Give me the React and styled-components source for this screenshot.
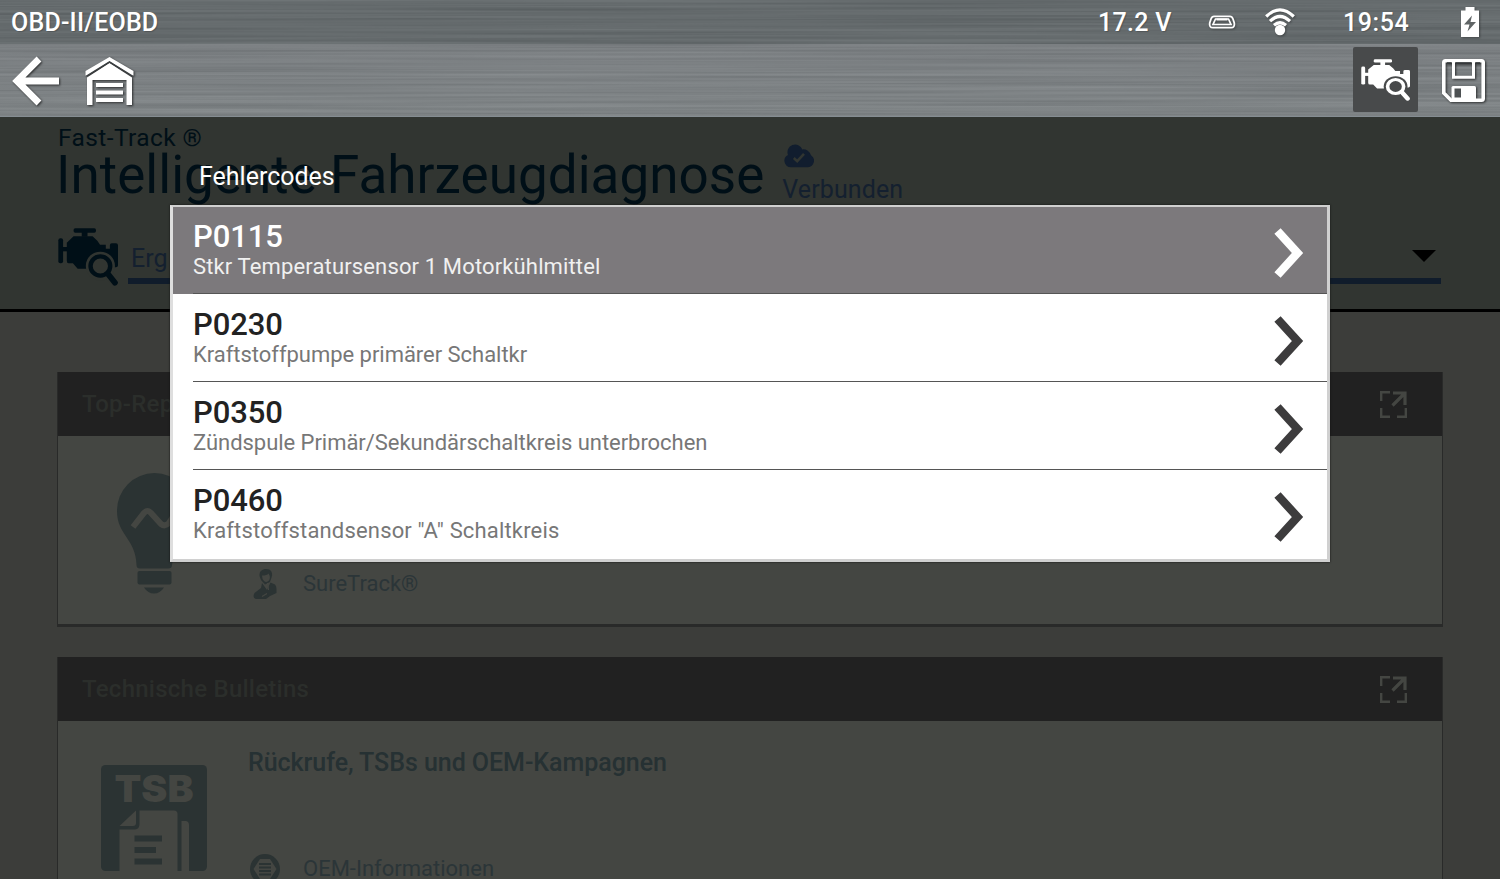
import React, { useState } from "react";
import styled, { createGlobalStyle } from "styled-components";


const codes = [
    { code: "P0115", text: "Stkr Temperatursensor 1 Motorkühlmittel", spacing: 0.14 },
    { code: "P0230", text: "Kraftstoffpumpe primärer Schaltkr", spacing: -0.03 },
    { code: "P0350", text: "Zündspule Primär/Sekundärschaltkreis unterbrochen", spacing: -0.04 },
    { code: "P0460", text: "Kraftstoffstandsensor \"A\" Schaltkreis", spacing: 0.17 }
];

const EngineIcon = ({ width, height, color, gap }) => (
    <svg width={width} height={height} viewBox="0 0 177 174" preserveAspectRatio="none" fill={color}>
        <rect x="46" y="1" width="66" height="13" rx="5" />
        <rect x="70" y="12" width="17" height="14" />
        <rect x="1" y="31" width="14" height="75" rx="6" />
        <rect x="12" y="57" width="18" height="13" />
        <path d="M26 44L46 25H102L116 38L124 50H141V62H153V52Q153 46 159 46H171Q177 46 177 52V112Q177 118 171 118H153V98H141L120 122H58L44 106H32Q26 106 26 98Z" />
        <circle cx="125" cy="114" r="43" fill={gap} />
        <path d="M140 130L172 164" stroke={gap} strokeWidth="26" />
        <circle cx="125" cy="114" r="29" fill="none" stroke={color} strokeWidth="13" />
        <path d="M147 137L168 164" stroke={color} strokeWidth="17" strokeLinecap="round" />
    </svg>
);

const BackIcon = () => (
    <svg width="48" height="50" viewBox="0 0 48 50" fill="none" stroke="#fff" strokeWidth="6.8">
        <path d="M27 3L5 25L27 47M6 25H47" />
    </svg>
);

const GarageIcon = () => (
    <svg width="49" height="49" viewBox="0 0 49 49" fill="#fff">
        <path d="M24.5 0L48.5 14V18.5H46.5L24.5 4.5L2.5 18.5H.5V14Z" />
        <path d="M24.5 6L47 20.5V48H41.5V23H7.5V48H2V20.5Z" />
        <path d="M1.5 19L24.5 4.8L47.5 19" fill="none" stroke="#3a3e40" strokeWidth="1.4" />
        <rect x="11" y="26" width="27" height="4" />
        <rect x="11" y="33.5" width="27" height="4" />
        <rect x="11" y="41" width="27" height="4" />
    </svg>
);

const SaveIcon = () => (
    <svg width="43" height="43" viewBox="0 0 43 43" fill="none" stroke="#fff" strokeWidth="3">
        <path d="M3.5 1.8H39.5Q41.2 1.8 41.2 3.5V39.5Q41.2 41.2 39.5 41.2H9L1.8 34V3.5Q1.8 1.8 3.5 1.8Z" strokeWidth="3.6" />
        <path d="M11.5 3V18.2H31.5V3" />
        <path d="M5 4H9.5M33.5 4H38M13.5 4H29.5" stroke="#33373a" strokeWidth="1.5" />
        <path d="M9.5 41V28.5Q9.5 27 11 27H32.5Q34 27 34 28.5V41Z" fill="#fff" stroke="none" />
        <path d="M12.5 29.5H19V38.5H12.5Z" fill="#4c5052" stroke="none" />
    </svg>
);

const UsbIcon = () => (
    <svg width="28" height="14" viewBox="0 0 28 14" fill="none" stroke="#fff">
        <path d="M6 1.3H22Q24 1.3 25 4L26.3 8Q27 12.5 23 12.7H5Q1 12.5 1.7 8L3 4Q4 1.3 6 1.3Z" strokeWidth="1.8" />
        <path d="M7.5 4H20.5L23 9.5H5Z" strokeWidth="1.7" />
        <path d="M8.5 4.5H19.5" strokeWidth="2" />
    </svg>
);

const WifiIcon = () => (
    <svg width="30" height="28" viewBox="0 0 30 28" fill="none" stroke="#fff" strokeWidth="3.2">
        <path d="M1.2 8.5Q15 -4.8 28.8 8.5" />
        <path d="M5 13.2Q15 3.7 25 13.2" />
        <path d="M9 17.3Q15 12.2 21 17.3" />
        <circle cx="15" cy="22" r="5.2" fill="#fff" stroke="none" />
    </svg>
);

const BatteryIcon = () => (
    <svg width="18" height="30" viewBox="0 0 18 30">
        <path d="M4.5 0H13.5V3.5H18V30H0V3.5H4.5Z" fill="#fff" />
        <path d="M11 8.5L3 17.5H8.5L6.5 24.5L15 15H9.5Z" fill="#5f6465" />
    </svg>
);

const CloudIcon = () => (
    <svg width="30" height="24" viewBox="0 0 30 24">
        <path d="M7 23.3A6.5 6.5 0 0 1 4 11A7.6 7.6 0 0 1 18.4 5.4A8 8 0 0 1 27 11.2A6.6 6.6 0 0 1 24 23.3Z" fill="#111d2e" />
        <path d="M9.8 14L13.2 17.2L20 9.8" fill="none" stroke="#313531" strokeWidth="2.6" />
    </svg>
);

const ChevronIcon = ({ color }) => (
    <svg width="30" height="50" viewBox="0 0 30 50" fill="none" stroke={color} strokeWidth="8.4">
        <path d="M3.5 3L23.5 25L3.5 47" />
    </svg>
);

const ExpandIcon = () => (
    <svg width="27" height="27" viewBox="0 0 27 27" fill="none" stroke="#444642" strokeWidth="2.4">
        <path d="M1.2 10V1.2H10M1.2 17V25.8H10M17 25.8H25.8V17" />
        <path d="M13 2H25V14M24 3L12.5 14.5" strokeWidth="3.2" />
    </svg>
);

const BulbIcon = () => (
    <svg width="76" height="122" viewBox="0 0 76 122" fill="#2b3333">
        <path d="M37.5 0A37.5 37.5 0 0 1 75 38C75 55 65 62 59 75Q55.5 83 55 92Q55 95.5 51 95.5H23Q19.5 95.5 19.5 92C19 66 0 62 0 38A37.5 37.5 0 0 1 37.5 0Z" />
        <path d="M16 54L27 40Q30.5 36 34 40L44 51Q48 54 52 50L60 38" fill="none" stroke="#444642" strokeWidth="6" />
        <rect x="20.5" y="98" width="34" height="13.5" rx="2" />
        <path d="M27 114.5H47Q43 120.5 37 120.5T27 114.5Z" />
    </svg>
);

const PersonIcon = () => (
    <svg width="24" height="30" viewBox="0 0 24 30" fill="#2b3333">
        <path d="M6.5 7C6 2 9.5 0 13 0C18 0 20 3.5 18.7 8L17 13L12 15.5L8 11Z" />
        <path d="M9 6.5Q14 6.5 15.5 4.5Q18 8 16 11.5Q13.5 14 11 12Q9 10 9 6.5Z" fill="#444642" />
        <path d="M9 14L14 21L17.5 13.5L22 15.5Q23.5 17 23.5 20V24Q18 26 13 30H3Q-1 29 1.500 24L8 19Z" />
        <path d="M9 27.500L14 24.5M14.5 14L15.5 21" stroke="#444642" strokeWidth="1.2" />
    </svg>
);

const TsbIcon = () => (
    <svg width="106" height="106" viewBox="0 0 106 106" fill="#2b3333">
        <rect width="106" height="106" rx="4.5" />
        <TsbText x="53" y="36.5" textAnchor="middle" textLength="79" lengthAdjust="spacingAndGlyphs">TSB</TsbText>
        <g fill="#444642">
            <path d="M18.5 61L35 45.5V58Q35 61 32 61Z" />
            <path d="M18.5 64.5H34Q38.5 64 38.5 59V45.5H73Q76.5 45.5 76.5 49V106H18.5Z" />
            <path d="M80.5 56H85Q88 56.5 88 60V106H80.5Z" />
        </g>
        <path d="M33.5 70.5H61V76.5H33.5ZM33.5 82H55V88H33.5ZM33.5 93.5H61V99.5H33.5Z" />
    </svg>
);

const OemIcon = () => (
    <svg width="30" height="30" viewBox="0 0 30 30">
        <circle cx="15" cy="15" r="15" fill="#2b3333" />
        <path d="M10 5H20L26.5 15L20 25H10L3.5 15Z" fill="#444642" />
        <path d="M9 10H21M9 13.500H21M9 17H21M9 20.500H21" stroke="#2b3333" strokeWidth="1.800" />
    </svg>
);

// Horizontal noise that gives both bars their brushed metal look
const BrushedMetal = () => (
    <Texture width="1500" height="117">
        <filter id="brushed" x="0" y="0" width="100%" height="100%" colorInterpolationFilters="sRGB">
            <feTurbulence type="fractalNoise" baseFrequency="0.0025 0.38" numOctaves="2" seed="8" />
            <feColorMatrix values="1 0 0 0 -0.05  1 0 0 0 -0.03  1 0 0 0 -0.02  0 0 0 0 0.12" />
        </filter>
        <rect width="1500" height="117" filter="url(#brushed)" />
    </Texture>
);

const App = () => {
    const [selected, setSelected] = useState(0);

    return (
        <Screen>
            <GlobalStyle />

            {/* Status bar and toolbar */}
            <Header>
                <BrushedMetal />
                <StatusBar>
                    <ModeName>OBD-II/EOBD</ModeName>
                    <Voltage>17.2 V</Voltage>
                    <UsbIcon />
                    <WifiIcon />
                    <Clock>19:54</Clock>
                    <BatteryIcon />
                </StatusBar>
                <Toolbar>
                    <IconButton aria-label="Zurück"><BackIcon /></IconButton>
                    <IconButton aria-label="Home"><GarageIcon /></IconButton>
                    <ActiveButton aria-label="Fehlercodes">
                        <EngineIcon width={49} height={42} color="#fff" gap="#484a4b" />
                    </ActiveButton>
                    <IconButton aria-label="Speichern"><SaveIcon /></IconButton>
                </Toolbar>
            </Header>

            {/* Page behind the dialog */}
            <Hero>
                <HeroTop>
                    <div>
                        <Brand>Fast-Track ®</Brand>
                        <Title>Intelligente Fahrzeugdiagnose</Title>
                    </div>
                    <Connection>
                        <CloudIcon />
                        <span>Verbunden</span>
                    </Connection>
                </HeroTop>
                <SelectRow>
                    <EngineIcon width={60} height={58} color="#000f17" gap="#313531" />
                    <SelectField>
                        <span>Erg</span>
                        <Caret />
                    </SelectField>
                </SelectRow>
            </Hero>

            <Cards>
                <Card>
                    <CardHeader>
                        <span>Top-Rep</span>
                        <ExpandIcon />
                    </CardHeader>
                    <CardBody>
                        <Picture $top={37} $left={59}><BulbIcon /></Picture>
                        <Details>
                            <Source>
                                <SourceIcon><PersonIcon /></SourceIcon>
                                <span>SureTrack®</span>
                            </Source>
                        </Details>
                    </CardBody>
                </Card>
                <Card>
                    <CardHeader>
                        <span>Technische Bulletins</span>
                        <ExpandIcon />
                    </CardHeader>
                    <CardBody>
                        <Picture $top={44} $left={43}><TsbIcon /></Picture>
                        <Details>
                            <CardTitle>Rückrufe, TSBs und OEM-Kampagnen</CardTitle>
                            <Source>
                                <SourceIcon><OemIcon /></SourceIcon>
                                <span>OEM-Informationen</span>
                            </Source>
                        </Details>
                    </CardBody>
                </Card>
            </Cards>

            {/* Trouble code list */}
            <Dialog>
                <DialogTitle>Fehlercodes</DialogTitle>
                <CodeList>
                    {codes.map((item, index) => (
                        <CodeRow
                            key={item.code}
                            $active={index === selected}
                            onClick={() => setSelected(index)}
                        >
                            <CodeContent>
                                <div>
                                    <Code>{item.code}</Code>
                                    <Description $active={index === selected} $spacing={item.spacing}>
                                        {item.text}
                                    </Description>
                                </div>
                                <ChevronIcon color={index === selected ? "#fff" : "#3d3c3d"} />
                            </CodeContent>
                        </CodeRow>
                    ))}
                </CodeList>
            </Dialog>
        </Screen>
    );
};

export default App;


const GlobalStyle = createGlobalStyle`
    * {
        box-sizing: border-box;
    }

    body {
        margin: 0;
        font-family: Roboto, "Liberation Sans", sans-serif;
        background-color: #3c3d3a;
    }

    svg {
        display: block;
        flex-shrink: 0;
    }
`;

const Screen = styled.div`
    position: relative;
    width: 1500px;
    height: 879px;
    overflow: hidden;
    background-color: #3c3d3a;
`;

const Header = styled.header`
    position: relative;
    z-index: 0;
    height: 117px;
    color: #fff;
    background: linear-gradient(#63696b 44px, #7c8083 44px, #7f8486);
`;

const Texture = styled.svg`
    position: absolute;
    top: 0;
    left: 0;
    z-index: -1;
    pointer-events: none;
`;

const StatusBar = styled.div`
    display: flex;
    align-items: center;
    height: 44px;
    padding: 0 21px 0 11px;
    font-size: 25px;
    font-weight: 500;
    text-shadow: 1px 1px 1px rgba(0, 0, 0, 0.2);

    svg {
        filter: drop-shadow(1px 1px 1px rgba(0, 0, 0, 0.35));
    }
`;

const ModeName = styled.span`
    flex: 1;
    letter-spacing: 0.2px;
`;

const Voltage = styled.span`
    width: 110px;
    letter-spacing: 0.3px;

    & + svg {
        margin-right: 29px;
    }
`;

const Clock = styled.span`
    width: 118px;
    margin-left: 48px;
    letter-spacing: 0.6px;
`;

const Toolbar = styled.div`
    display: flex;
    align-items: center;
    height: 73px;
    padding: 1px 15px 0 12px;
    border-bottom: 1px solid #858d92;
`;

const IconButton = styled.button`
    padding: 0;
    border: none;
    background: none;
    cursor: pointer;
    filter: drop-shadow(1px 1px 1px rgba(0, 0, 0, 0.65));

    & + & {
        margin: 2px 0 0 25px;
    }
`;

const ActiveButton = styled.button`
    display: flex;
    align-items: center;
    justify-content: center;
    width: 65px;
    height: 65px;
    margin: -2px 24px 0 auto;
    padding: 0;
    border: none;
    border-radius: 2px;
    background-color: #484a4b;
    cursor: pointer;
`;

const Hero = styled.section`
    height: 195px;
    padding: 10px 58px 0;
    background-color: #313531;
    border-bottom: 3px solid #000;
`;

const HeroTop = styled.div`
    display: flex;
    gap: 18px;
    height: 76px;
`;

const Brand = styled.div`
    font-size: 24.5px;
    line-height: 22px;
    letter-spacing: 0.4px;
    color: #000f17;
`;

const Title = styled.h1`
    margin: 0 0 0 -2px;
    font-size: 53px;
    font-weight: 400;
    line-height: 53px;
    letter-spacing: 0.04px;
    color: #000f17;
    white-space: nowrap;
`;

const Connection = styled.div`
    display: flex;
    flex-direction: column;
    gap: 7px;
    padding-top: 17px;
    font-size: 25px;
    line-height: 29px;
    letter-spacing: 0.1px;
    color: #14202f;

    svg {
        margin-left: 2px;
    }
`;

const SelectRow = styled.div`
    display: flex;
    gap: 10px;
    margin-top: 25px;
`;

const SelectField = styled.div`
    display: flex;
    align-items: center;
    justify-content: space-between;
    flex: 1;
    height: 56px;
    padding: 0 5px 0 3px;
    border-bottom: 6px solid #101c2b;
    margin-right: 1px;
    font-size: 25px;
    line-height: 28px;
    color: #14202f;

    span {
        padding-top: 12px;
    }
`;

const Caret = styled.i`
    margin-top: 6px;
    border-top: 12px solid #000;
    border-left: 12.5px solid transparent;
    border-right: 12.5px solid transparent;
`;

const Cards = styled.main`
    display: flex;
    flex-direction: column;
    gap: 30px;
    padding: 60px 57px;
`;

const Card = styled.article`
    display: flex;
    flex-direction: column;
    height: 255px;
    border: 1px solid #292a29;
    border-top: none;
    border-bottom-width: 3px;
    background-color: #444642;
`;

const CardHeader = styled.header`
    display: flex;
    align-items: center;
    justify-content: space-between;
    height: 64px;
    padding: 0 35px 0 24px;
    background-color: #212121;
    font-size: 24px;
    font-weight: 500;
    letter-spacing: 0.25px;
    color: #2b2e2b;
`;

const CardBody = styled.div`
    display: flex;
    flex: 1;
`;

const Picture = styled.div`
    width: 190px;
    padding: ${(props) => `${props.$top}px 0 0 ${props.$left}px`};
`;

const Details = styled.div`
    display: flex;
    flex-direction: column;
    flex: 1;
`;

const CardTitle = styled.h2`
    margin: 0;
    padding-top: 27px;
    font-size: 25px;
    font-weight: 500;
    line-height: 30px;
    letter-spacing: -0.05px;
    color: #263133;
`;

const Source = styled.div`
    display: flex;
    align-items: center;
    gap: 23px;
    margin-top: auto;
    padding: 0 0 25px 2px;
    font-size: 22px;
    line-height: 30px;
    color: #2b3538;
`;

const SourceIcon = styled.div`
    display: flex;
    justify-content: center;
    width: 30px;
`;

const TsbText = styled.text`
    font-family: Inter, Roboto, sans-serif;
    font-size: 37px;
    font-weight: 900;
    fill: #444642;
`;

const Dialog = styled.div`
    position: absolute;
    top: 160px;
    left: 170px;
    width: 1160px;
`;

const DialogTitle = styled.h2`
    margin: 0;
    height: 45px;
    padding-left: 29px;
    font-size: 25px;
    font-weight: 400;
    line-height: 33px;
    color: #fff;
`;

const CodeList = styled.ul`
    margin: 0;
    padding: 0;
    height: 357px;
    list-style: none;
    background-color: #fff;
    border: 2px solid #d0d0d0;
    border-width: 2px 3px 3px;
    border-left-color: #dedede;
    box-shadow: 0 0 2px #111;
`;

const CodeRow = styled.li`
    padding-left: 20px;
    color: ${(props) => (props.$active ? "#fff" : "#222")};
    background-color: ${(props) => (props.$active ? "#7c797c" : "#fff")};
    cursor: pointer;
`;

const CodeContent = styled.div`
    display: flex;
    align-items: center;
    justify-content: space-between;
    height: 88px;
    padding: 1px 23px 0 0;
    border-bottom: 1px solid #555;

    svg {
        margin-top: 5px;
    }

    ${CodeRow}:first-child & {
        height: 87px;
    }

    ${CodeRow}:last-child & {
        border-bottom-color: transparent;
    }
`;

const Code = styled.div`
    font-size: 31px;
    font-weight: 500;
    line-height: 32px;
    letter-spacing: -0.1px;
`;

const Description = styled.div`
    font-size: 22px;
    line-height: 27px;
    letter-spacing: ${(props) => props.$spacing}px;
    color: ${(props) => (props.$active ? "#f0f0f0" : "#777")};
`;
